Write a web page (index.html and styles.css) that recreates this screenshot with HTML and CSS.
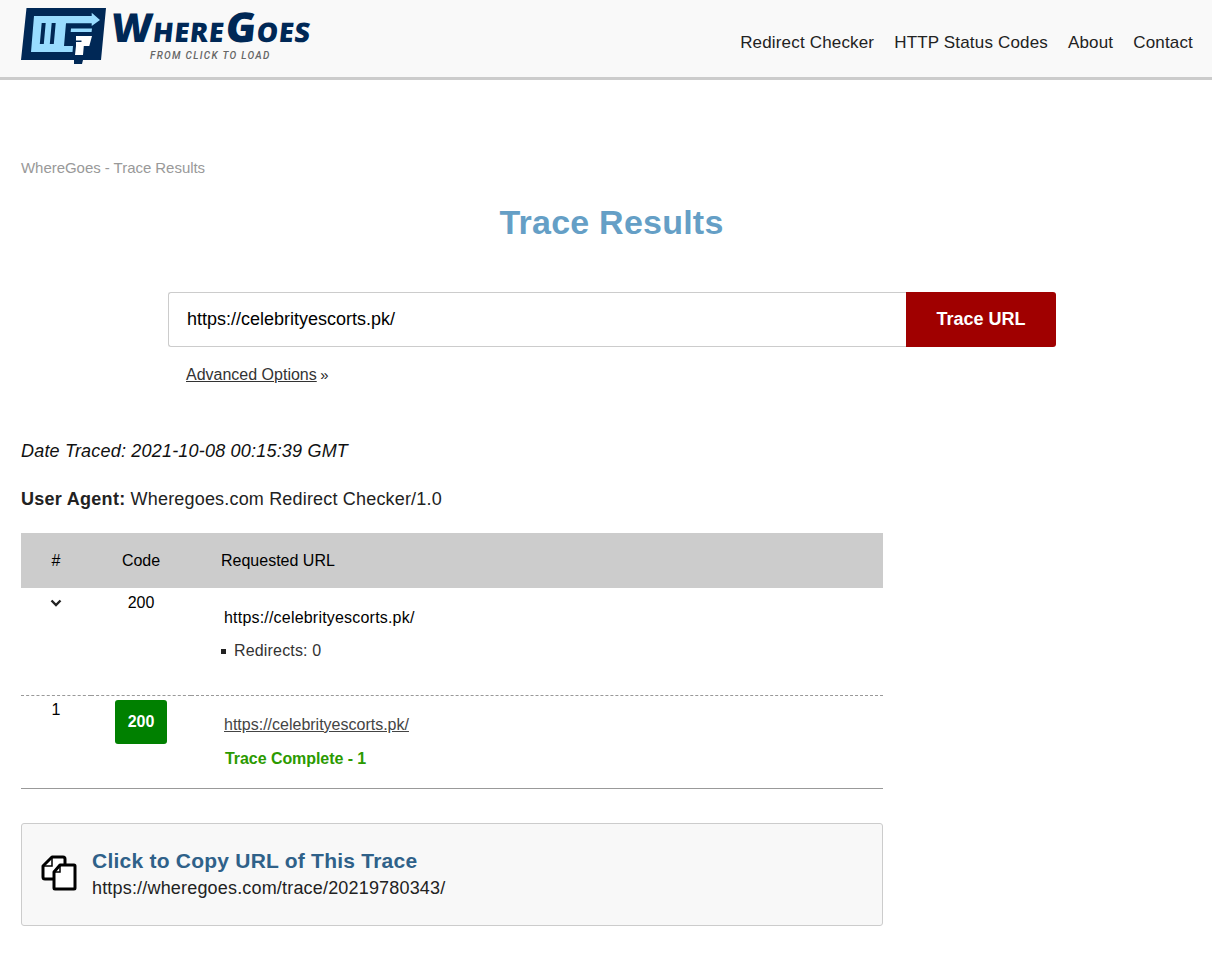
FILE: index.html
```html
<!DOCTYPE html>
<html lang="en">
<head>
<meta charset="utf-8">
<title>Trace Results - WhereGoes</title>
<link rel="stylesheet" href="styles.css">
</head>
<body>
<header class="site-header">
  <a class="brand" href="#">
    <svg class="brand-mark" width="87" height="57" viewBox="0 0 87 57">
      <path fill="#002856" d="M5.500 0H85L80 52H62L61 56H53V52H0Z"/>
      <path fill="#99dcff" d="M13 8H70.700V4.700L79 12L70.700 18V15.300H45L43 38H52L51.500 44H10Z"/>
      <path fill="#002856" d="M20.700 15H24.700L22.800 36H18.800ZM30.700 15H34.700L32.800 36H28.800Z"/>
      <path fill="#99dcff" d="M50 20.500H71L70.600 24H49.700Z"/>
      <path fill="#fff" d="M55 28H71L68.300 38H62.800L62 47H54L55 38Z"/>
      <path fill="#002856" d="M54.500 32.500H60.500V34H54.500Z"/>
    </svg>
    <span class="brand-copy">
      <span class="brand-name"><span class="cap">W</span>HERE<span class="cap-g">G</span>OES</span>
      <span class="brand-tag">FROM CLICK TO LOAD</span>
    </span>
  </a>
  <nav class="nav">
    <a href="#">Redirect Checker</a>
    <a href="#">HTTP Status Codes</a>
    <a href="#">About</a>
    <a href="#">Contact</a>
  </nav>
</header>

<main class="content">
  <p class="crumb">WhereGoes - Trace Results</p>
  <h1 class="title">Trace Results</h1>

  <form class="trace-form">
    <div class="trace-row">
      <input class="trace-input" type="text" value="https://celebrityescorts.pk/">
      <button class="trace-btn" type="button">Trace URL</button>
    </div>
    <p class="advanced"><a href="#">Advanced Options</a> <span class="raquo">»</span></p>
  </form>

  <p class="date">Date Traced: 2021-10-08 00:15:39 GMT</p>
  <p class="agent"><strong>User Agent:</strong> Wheregoes.com Redirect Checker/1.0</p>

  <table class="trace-table">
    <thead>
      <tr><th class="col-num">#</th><th class="col-code">Code</th><th class="col-url">Requested URL</th></tr>
    </thead>
    <tbody>
      <tr class="row-summary">
        <td class="col-num">
          <svg class="chev" width="12" height="8" viewBox="0 0 12 8"><path d="M1.500 1.500L6 6L10.500 1.500" fill="none" stroke="#222" stroke-width="2.400"/></svg>
        </td>
        <td class="col-code">200</td>
        <td class="col-url">
          <div class="req-url">https://celebrityescorts.pk/</div>
          <ul class="meta"><li>Redirects: 0</li></ul>
        </td>
      </tr>
      <tr class="row-hop">
        <td class="col-num">1</td>
        <td class="col-code"><span class="badge">200</span></td>
        <td class="col-url">
          <a class="hop-link" href="#">https://celebrityescorts.pk/</a>
          <div class="complete">Trace Complete - 1</div>
        </td>
      </tr>
    </tbody>
  </table>

  <div class="copy-box">
    <svg class="copy-icon" width="36" height="36" viewBox="0 0 36 36">
      <path fill="#fff" stroke="#000" stroke-width="3" stroke-linejoin="round" d="M11 2H22Q24 2 24 4V24H4Q2 24 2 22V11Z"/>
      <path fill="none" stroke="#000" stroke-width="1.500" d="M11 2V11H2"/>
      <path fill="#fff" stroke="#000" stroke-width="3" stroke-linejoin="round" d="M19 10H33Q34 10 34 11V33Q34 34 33 34H14Q13 34 13 33V17Z"/>
      <path fill="none" stroke="#000" stroke-width="1.500" d="M19 10V17H13"/>
    </svg>
    <div class="copy-text">
      <div class="copy-title">Click to Copy URL of This Trace</div>
      <div class="copy-url">https://wheregoes.com/trace/20219780343/</div>
    </div>
  </div>
</main>
</body>
</html>
```
FILE: styles.css
```css
* { box-sizing: border-box; }
html, body { margin: 0; padding: 0; }
body {
  font-family: "Liberation Sans", Arial, sans-serif;
  color: #222;
  background: #fff;
  font-size: 16px;
}
a { color: inherit; }

.site-header {
  height: 80px;
  background: #f9f9f9;
  border-bottom: 3px solid #ccc;
  display: flex;
  justify-content: space-between;
  padding: 8px 19px 0 21px;
}
.brand {
  display: flex;
  align-items: flex-start;
  gap: 5px;
  text-decoration: none;
}
.brand-mark { display: block; flex: none; }
.brand-copy { display: flex; flex-direction: column; align-items: flex-start; }
.brand-name {
  font-family: "Open Sans", sans-serif;
  font-weight: 800;
  font-size: 27px;
  line-height: 56px;
  letter-spacing: 0.750px;
  color: #002856;
  white-space: nowrap;
  transform: skewX(-6deg);
  transform-origin: left center;
  margin: -10px 0 0 -2px;
}
.cap { font-size: 40px; }
.cap-g { font-size: 41px; margin-left: 1px; }
.brand-tag {
  font-family: Roboto, sans-serif;
  font-style: italic;
  font-weight: 500;
  font-size: 10px;
  letter-spacing: 1.300px;
  line-height: 12px;
  color: #666;
  margin: -10px 0 0 37px;
}
.nav {
  display: flex;
  gap: 20px;
  padding-top: 25px;
  font-size: 17px;
  line-height: 20px;
  letter-spacing: 0.170px;
}
.nav a { text-decoration: none; color: #222; }

.content { padding: 0 21px; }
.crumb {
  margin: 0;
  padding-top: 79px;
  font-size: 15px;
  line-height: 17px;
  letter-spacing: -0.040px;
  color: #999;
}
.title {
  margin: 26px 0 0 11px;
  text-align: center;
  font-size: 34px;
  line-height: 40px;
  font-weight: 700;
  letter-spacing: 0.230px;
  color: #659fc6;
}
.trace-form { margin: 50px 135px 0 147px; }
.trace-row { display: flex; height: 55px; }
.trace-input {
  flex: 1;
  min-width: 0;
  border: 1px solid #ccc;
  border-right: 0;
  border-radius: 3px 0 0 3px;
  padding: 0 18px;
  font: 18px "Liberation Sans", Arial, sans-serif;
  color: #000;
  background: #fff;
}
.trace-btn {
  width: 150px;
  border: 0;
  border-radius: 0 3px 3px 0;
  background: #a00000;
  color: #fff;
  padding: 0 0 1px;
  font: 700 18px "Liberation Sans", Arial, sans-serif;
}
.advanced { margin: 18px 0 0 18px; font-size: 16px; line-height: 19px; color: #333; }
.raquo { color: #222; margin-left: -1px; font-size: 15px; }

.date { margin: 57px 0 0; font-style: italic; font-size: 18px; line-height: 21px; letter-spacing: 0.200px; color: #111; }
.agent { margin: 27px 0 0; font-size: 18px; line-height: 21px; letter-spacing: 0.180px; color: #222; }
.agent strong { letter-spacing: 0.280px; }

.trace-table {
  margin-top: 23px;
  width: 862px;
  border-collapse: collapse;
  table-layout: fixed;
  font-size: 16px;
  color: #000;
}
.col-num { width: 70px; text-align: center; }
.col-code { width: 100px; text-align: center; }
.col-url { text-align: left; }
.trace-table th {
  height: 55px;
  background: #ccc;
  font-weight: 400;
  padding: 0;
}
.trace-table th.col-url { padding-left: 30px; }
.trace-table td { vertical-align: top; padding: 0; line-height: 18px; }
.trace-table td.col-url { padding-left: 33px; }
.row-summary td { height: 107px; border-bottom: 1px dashed #999; }
.trace-table .row-summary td { padding-top: 6px; }
.trace-table .row-summary td.col-url { padding-top: 20px; }
.chev { display: block; margin: 5px auto 0; }
.req-url { line-height: 19px; letter-spacing: 0.200px; }
.meta { list-style: none; margin: 14px 0 0 -4px; padding: 0; color: #333; letter-spacing: 0.170px; }
.meta li { position: relative; padding-left: 14px; line-height: 19px; }
.meta li::before {
  content: "";
  position: absolute;
  left: 1px;
  top: 8px;
  width: 5px;
  height: 5px;
  background: #222;
}
.row-hop td { height: 93px; border-bottom: 1px solid #999; }
.trace-table .row-hop td { padding-top: 5px; }
.trace-table .row-hop td.col-url { padding-top: 19px; }
.badge {
  display: inline-block;
  width: 52px;
  height: 44px;
  line-height: 44px;
  background: #008000;
  color: #fff;
  font-weight: 700;
  border-radius: 3px;
}
.trace-table .row-hop td.col-code { padding-top: 4px; }
.hop-link { color: #444; line-height: 19px; display: inline-block; }
.complete { margin: 15px 0 0 1px; color: #2b9a00; font-weight: 700; line-height: 19px; letter-spacing: -0.060px; }

.copy-box {
  margin-top: 34px;
  width: 862px;
  height: 103px;
  background: #f8f8f8;
  border: 1px solid #ccc;
  border-radius: 3px;
  display: flex;
  align-items: center;
  gap: 15px;
  padding-left: 19px;
  margin-bottom: 31px;
}
.copy-icon { display: block; flex: none; margin-bottom: 2px; }
.copy-text { margin-top: 1px; }
.copy-title { font-size: 21px; font-weight: 700; line-height: 26px; color: #2f6189; letter-spacing: 0.230px; }
.copy-url { font-size: 18px; line-height: 26px; letter-spacing: 0.180px; color: #222; margin-top: 1px; }
```
